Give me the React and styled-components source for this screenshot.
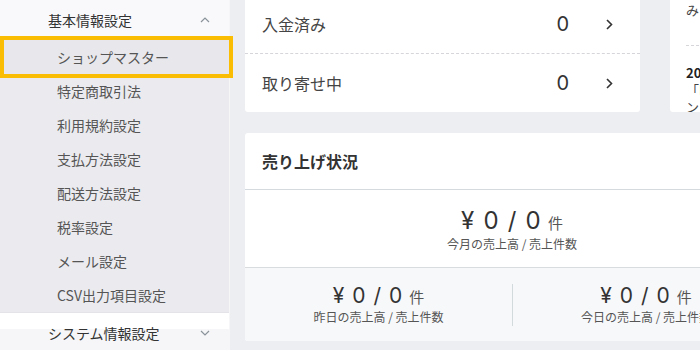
import React from "react";
import styled, { createGlobalStyle } from "styled-components";

const Global = createGlobalStyle`
  html, body { margin: 0; padding: 0; }
  body {
    width: 700px;
    height: 350px;
    overflow: hidden;
    background: #edeef2;
    font-family: "Noto Sans CJK JP", "Liberation Sans", sans-serif;
    color: #333;
  }
`;

const Layout = styled.div`
  display: flex;
  align-items: flex-start;
  width: 1100px;
  height: 350px;
  overflow: hidden;
`;

const Sidebar = styled.nav`
  position: relative;
  z-index: 2;
  flex: 0 0 229px;
  width: 229px;
  height: 350px;
  background: #ebebef;
  border-right: 1px solid #f6f6f8;
  display: flex;
  flex-direction: column;
`;

const GroupHeader = styled.div`
  height: 40px;
  flex: 0 0 40px;
  display: flex;
  align-items: center;
  justify-content: space-between;
  padding: 0 16px 0 48px;
  font-size: 14px;
  color: #333;
  background: ${(p) =>
    p.$split
      ? "linear-gradient(to bottom, #ffffff 0, #ffffff 16px, #f6f6f8 16px)"
      : "#f9f9fb"};
  border-top: ${(p) => (p.$split ? "1px solid #e3e3e8" : "none")};
  box-sizing: border-box;
`;

const Chevron = styled.svg`
  width: 12px;
  height: 12px;
  color: #8a9399;
  margin-right: 2px;
`;

const Item = styled.div`
  position: relative;
  height: 34px;
  flex: 0 0 34px;
  display: flex;
  align-items: center;
  padding-left: 57px;
  font-size: 14px;
  color: #555;
  background: ${(p) => (p.$active ? "#e8e8ec" : "transparent")};
  &::after {
    content: "";
    display: ${(p) => (p.$active ? "block" : "none")};
    position: absolute;
    left: 0;
    right: -4px;
    top: -4px;
    bottom: -4px;
    border: 4px solid #fbbc04;
  }
`;

const Main = styled.main`
  flex: 1;
  padding: 0 0 0 15px;
  display: flex;
  flex-direction: column;
  gap: 21px;
  margin-top: -5px;
`;

const TopRow = styled.div`
  display: flex;
  gap: 30px;
  align-items: flex-start;
`;

const Card = styled.section`
  background: #fff;
  border-radius: 3px;
  width: ${(p) => p.$w}px;
  overflow: hidden;
`;

const StatusRow = styled.div`
  height: 58px;
  display: flex;
  align-items: center;
  padding: 0 27px 0 17px;
  font-size: 16px;
  color: #444;
  & + & {
    border-top: 1px dashed #d6d6da;
  }
`;

const StatusLabel = styled.span`
  flex: 1;
`;

const StatusCount = styled.span`
  font-family: "Inter", "Noto Sans CJK JP", sans-serif;
  font-size: 20px;
  color: #333;
  margin-right: 37px;
`;

const RowArrow = styled.svg`
  width: 7px;
  height: 11px;
  color: #333;
`;

const NewsCard = styled(Card)`
  height: 117px;
  padding: 0 0 0 16px;
  font-size: 13px;
  color: #444;
  line-height: 17px;
`;

const NewsItem = styled.div`
  padding: ${(p) => p.$top}px 0 27px;
  white-space: nowrap;
  & + & {
    border-top: 1px dashed #d6d6da;
  }
`;

const NewsDate = styled.div`
  font-weight: 700;
  color: #222;
`;

const SalesCard = styled(Card)``;

const SalesHeader = styled.div`
  height: 56px;
  display: flex;
  align-items: center;
  padding-left: 17px;
  font-size: 16px;
  font-weight: 700;
  color: #333;
  border-bottom: 1px solid #d4dadd;
`;

const Figure = styled.div`
  display: flex;
  flex-direction: column;
  align-items: center;
  justify-content: center;
  gap: 1px;
`;

const MonthBlock = styled(Figure)`
  height: 78px;
  border-bottom: 1px solid #d8dcdf;
  padding-top: 3px;
  box-sizing: border-box;
`;

const BottomBlock = styled.div`
  height: 73px;
  background: #f7f8fa;
  display: grid;
  grid-template-columns: 1fr 1fr;
  align-items: center;
`;

const Half = styled(Figure)`
  height: 42px;
  & + & {
    border-left: 1px solid #d3dadb;
  }
`;

const Amount = styled.div`
  display: flex;
  align-items: baseline;
  white-space: pre;
  font-family: "Inter", "Noto Sans CJK JP", sans-serif;
  font-size: ${(p) => p.$size}px;
  line-height: 1.1;
  color: #333;
  letter-spacing: 0.05em;
`;

const Unit = styled.span`
  font-family: "Noto Sans CJK JP", sans-serif;
  font-size: 15px;
  color: #555;
  letter-spacing: 0;
  margin-left: 6px;
`;

const Caption = styled.div`
  font-size: 12px;
  color: #555;
`;

const Up = () => (
  <Chevron viewBox="0 0 12 12">
    <path d="M2 8 L6 4 L10 8" fill="none" stroke="currentColor" strokeWidth="1.2" />
  </Chevron>
);
const Down = () => (
  <Chevron viewBox="0 0 12 12">
    <path d="M2 4 L6 8 L10 4" fill="none" stroke="currentColor" strokeWidth="1.2" />
  </Chevron>
);
const Next = () => (
  <RowArrow viewBox="0 0 7 11">
    <path d="M1 1 L5.5 5.5 L1 10" fill="none" stroke="currentColor" strokeWidth="1.6" />
  </RowArrow>
);

const items = [
  "特定商取引法",
  "利用規約設定",
  "支払方法設定",
  "配送方法設定",
  "税率設定",
  "メール設定",
  "CSV出力項目設定",
];

function Sales({ size, caption }) {
  return (
    <>
      <Amount $size={size}>
        {"¥ 0 / 0"}
        <Unit>件</Unit>
      </Amount>
      <Caption>{caption}</Caption>
    </>
  );
}

export default function App() {
  return (
    <>
      <Global />
      <Layout>
        <Sidebar>
          <GroupHeader>
            基本情報設定
            <Up />
          </GroupHeader>
          <Item $active>ショップマスター</Item>
          {items.map((t) => (
            <Item key={t}>{t}</Item>
          ))}
          <GroupHeader $split>
            システム情報設定
            <Down />
          </GroupHeader>
        </Sidebar>
        <Main>
          <TopRow>
            <Card $w={395}>
              <StatusRow>
                <StatusLabel>入金済み</StatusLabel>
                <StatusCount>0</StatusCount>
                <Next />
              </StatusRow>
              <StatusRow>
                <StatusLabel>取り寄せ中</StatusLabel>
                <StatusCount>0</StatusCount>
                <Next />
              </StatusRow>
            </Card>
            <NewsCard $w={360}>
              <NewsItem $top={6}>
                <div>みください。</div>
              </NewsItem>
              <NewsItem $top={18}>
                <NewsDate>2021/04/01</NewsDate>
                <div>「EC-CUBE 4.0.5」をリリースしました。</div>
                <div>ンストールをお願いします。</div>
              </NewsItem>
            </NewsCard>
          </TopRow>
          <SalesCard $w={534}>
            <SalesHeader>売り上げ状況</SalesHeader>
            <MonthBlock>
              <Sales size={24} caption="今月の売上高 / 売上件数" />
            </MonthBlock>
            <BottomBlock>
              <Half>
                <Sales size={21} caption="昨日の売上高 / 売上件数" />
              </Half>
              <Half>
                <Sales size={21} caption="今日の売上高 / 売上件数" />
              </Half>
            </BottomBlock>
          </SalesCard>
        </Main>
      </Layout>
    </>
  );
}
